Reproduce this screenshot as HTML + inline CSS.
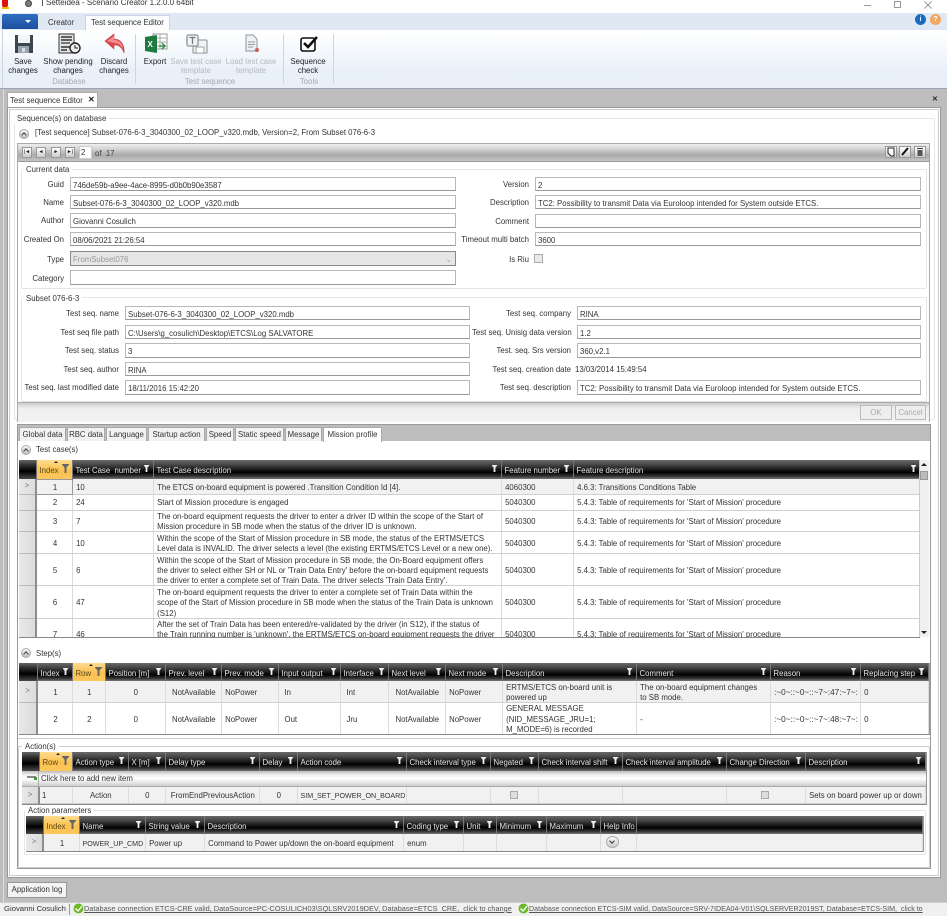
<!DOCTYPE html>
<html><head><meta charset="utf-8"><title>Setteidea - Scenario Creator</title>
<style>
html,body{margin:0;padding:0;background:#bdbdbd}
body{width:947px;height:916px;position:relative;overflow:hidden;font-family:"Liberation Sans",sans-serif;font-size:7.8px;color:#2a2a2a}
#w{position:absolute;left:0;top:0;width:947px;height:916px;overflow:hidden;filter:blur(.35px)}
.a{position:absolute;white-space:nowrap}
.b{position:absolute;box-sizing:border-box}
.t{position:absolute;text-align:center;line-height:9px;white-space:nowrap;color:#222;transform:translateX(-50%)}
.g{color:#b5b9bf}
.gl{position:absolute;text-align:center;color:#a4a9b0;white-space:nowrap;transform:translateX(-50%)}
.fs{position:absolute;box-sizing:border-box;border:1px solid #dfe7ec;border-radius:2px}
.lg{position:absolute;background:#fff;padding:0 3px;white-space:nowrap;line-height:9px;color:#333}
.l{position:absolute;text-align:right;white-space:nowrap;line-height:15px;color:#333}
.i{position:absolute;box-sizing:border-box;background:#fff;border:1px solid #b8b8b8;border-bottom-color:#999;padding-left:2px;white-space:nowrap;overflow:hidden;color:#333;line-height:15px}
.tg{position:absolute;width:10px;height:10px;border-radius:50%;box-sizing:border-box;border:1px solid #aaa;background:linear-gradient(#fafafa,#bbb)}
.tg:after{content:"";position:absolute;left:2px;top:3px;width:3px;height:3px;border-left:1px solid #444;border-top:1px solid #444;transform:rotate(45deg)}
.tb{position:absolute;top:427px;height:14px;box-sizing:border-box;background:#f2f2f2;border:1px solid #aaa;border-bottom:0;text-align:center;line-height:13px;white-space:nowrap;color:#333}
.gw{position:absolute;overflow:hidden;background:#fff}
table{border-collapse:collapse;table-layout:fixed;position:absolute;left:0;top:0}
th{background:linear-gradient(#6a6a6a 0,#464646 25%,#1a1a1a 50%,#000 65%,#333 85%,#777 100%);color:#e4e4e4;font-weight:normal;text-align:left;padding:2px 0 0 3px;border-right:1px solid #777;position:relative;white-space:nowrap;overflow:hidden;box-sizing:border-box}
th.o{background:linear-gradient(#fddc8e,#fbc14f 55%,#fcc75e);color:#5b4a20}
th.o:before{content:"";position:absolute;left:50%;top:1px;border:2px solid transparent;border-top:0;border-bottom:2px solid #222}
th i{position:absolute;right:3px;top:5px;width:6px;height:7px;background:#eee;clip-path:polygon(0 0,100% 0,65% 40%,65% 100%,35% 100%,35% 40%)}
th.o i{right:2px;top:4px;width:8px;height:9px;background:#666;clip-path:polygon(0 0,100% 0,62% 40%,62% 100%,38% 100%,38% 40%)}
td{box-sizing:border-box;border-right:1px solid #dcdcdc;border-bottom:1px solid #d0d0d0;padding:0 2px 0 3.6px;line-height:10.4px;white-space:nowrap;color:#333;background:#fff}
td b{display:block;position:relative;top:1.5px;font-weight:normal}
tr.s td{background:#f1f1f1}
td.n{text-align:center}
td.r{background:linear-gradient(90deg,#e8e8e8,#dcdcdc)!important;border-right:2px solid #8d8d8d;border-bottom:1px solid #bbb;text-align:center;color:#777;padding:0}
th.k{background:linear-gradient(#666,#2a2a2a 30%,#000 60%,#4a4a4a 100%)}
.nv{position:absolute;width:10px;height:11px;top:147px;box-sizing:border-box;border:1px solid #999;background:linear-gradient(#fff,#ccc);font-size:5px;text-align:center;line-height:9px;color:#111}
.nr{position:absolute;width:12px;height:12px;top:146px;box-sizing:border-box;border:1px solid #999;background:linear-gradient(#fff,#ccc)}
.cb{position:absolute;width:8px;height:8px;box-sizing:border-box;border:1px solid #aaa;background:#ddd}
u{text-decoration:underline}
</style></head><body><div id="w">

<!-- title bar -->
<div class="b" style="left:0;top:0;width:947px;height:13px;background:#fff"></div>
<div class="b" style="left:2px;top:0;width:6px;height:8px;background:#d8140c;border-radius:0 0 3px 3px"></div>
<div class="b" style="left:2px;top:7px;width:7px;height:2px;background:#f0c000"></div>
<div class="b" style="left:25px;top:0;width:7px;height:7px;border-radius:50%;background:#7c7c7c;border:1px solid #444"></div>
<div class="a" style="left:46px;top:-2px;line-height:10px;font-size:8px;color:#333">Setteidea - Scenario Creator 1.2.0.0 64bit</div>
<div class="b" style="left:42px;top:0;width:1px;height:6px;background:#555"></div>
<div class="b" style="left:864px;top:5px;width:7px;height:1px;background:#999"></div>
<div class="b" style="left:894px;top:1px;width:7px;height:7px;border:1px solid #999"></div>
<svg class="b" style="left:924px;top:1px" width="8" height="8"><path d="M0.5 0.5L7.5 7.5M7.5 0.5L0.5 7.5" stroke="#999" fill="none"/></svg>

<!-- ribbon tabs -->
<div class="b" style="left:0;top:13px;width:947px;height:17px;background:#dfe8f3"></div>
<div class="b" style="left:2px;top:14px;width:36px;height:15px;background:linear-gradient(#2f6fc4,#1d4f9f);border-radius:2px 2px 0 0"></div>
<div class="b" style="left:25px;top:20px;border:3px solid transparent;border-top:3px solid #fff;border-bottom:0"></div>
<div class="a" style="left:48px;top:18px;line-height:10px;color:#333">Creator</div>
<div class="b" style="left:85px;top:15px;width:85px;height:16px;background:#fbfdfe;border:1px solid #ccd6e2;border-bottom:0"></div>
<div class="a" style="left:91px;top:18px;line-height:10px;color:#333">Test sequence Editor</div>
<div class="b" style="left:915px;top:14px;width:11px;height:11px;border-radius:50%;background:#1a6cc0;color:#fff;text-align:center;line-height:11px;font-weight:bold;font-size:7px">i</div>
<div class="b" style="left:930px;top:14px;width:11px;height:11px;border-radius:50%;background:#f2a860;color:#fff;text-align:center;line-height:11px;font-weight:bold;font-size:7px">?</div>

<!-- ribbon -->
<div class="b" style="left:0;top:30px;width:947px;height:59px;background:linear-gradient(#fff,#fafcfe 20%,#e9f0f9 70%,#e8eff8);border-bottom:1px solid #9aa5b1"></div>
<div class="b" style="left:2px;top:30px;width:1px;height:58px;background:#ccd4de"></div>
<div class="b" style="left:135px;top:34px;width:1px;height:50px;background:#cdd6e0"></div>
<div class="b" style="left:283px;top:34px;width:1px;height:50px;background:#cdd6e0"></div>
<div class="b" style="left:333px;top:34px;width:1px;height:50px;background:#cdd6e0"></div>

<svg class="b" style="left:14px;top:34px" width="20" height="20"><path d="M1 1H19V19H1Z" fill="#3c4650"/><path d="M4 1H16V9H4Z" fill="#f2f4f6"/><path d="M4 12H15V19H4Z" fill="#9aa3ad"/><path d="M8 14H11V18H8Z" fill="#d8dde2"/></svg>
<svg class="b" style="left:58px;top:33px" width="23" height="22"><path d="M1 1H16V20H1Z" fill="#e4e4e4" stroke="#333"/><path d="M3 4H14M3 7H14M3 14H14M3 17H9" stroke="#333" stroke-width="1.6"/><path d="M3 10H12" stroke="#777" stroke-width="2"/><circle cx="17" cy="15" r="5" fill="#eee" stroke="#222" stroke-width="1.4"/><path d="M17 12V15H20" stroke="#222" fill="none"/></svg>
<svg class="b" style="left:104px;top:33px" width="22" height="22"><path d="M1 8L10 1V6C16 6 21 11 20 20C18 14 15 12 10 12V16Z" fill="#e2474b" stroke="#b8484c" stroke-width=".6"/><path d="M3 8L10 3V7C15 7 19 11 19 16C17 12 14 10 10 10" fill="#f38e90"/></svg>
<svg class="b" style="left:144px;top:33px" width="24" height="22"><path d="M9 1H23V16H9Z" fill="#fff" stroke="#999"/><path d="M9 5H23M9 9H23M9 13H23M16 1V16" stroke="#aaa"/><path d="M1 4L13 2V20L1 18Z" fill="#1f7a3e"/><text x="3.5" y="14" font-size="8" font-weight="bold" fill="#fff" font-family="Liberation Sans">X</text><path d="M15 13H21M18 10L21 13L18 16" stroke="#2a8a4a" stroke-width="1.4" fill="none"/></svg>
<svg class="b" style="left:186px;top:34px" width="22" height="20"><rect x="7" y="6" width="14" height="13" rx="1" fill="#f1f3f5" stroke="#9ea3a8" stroke-width="1.3"/><path d="M10 13H18V19H10Z" fill="#fff" stroke="#9ea3a8"/><rect x="1" y="1" width="11" height="11" rx="1.5" fill="#f1f3f5" stroke="#8f9498" stroke-width="1.3"/><path d="M3.5 3.5H9.5M6.5 3.5V10" stroke="#777" stroke-width="1.3"/></svg>
<svg class="b" style="left:244px;top:34px" width="16" height="20"><path d="M2 1H9L13 5V17H2Z" fill="#eef0f2" stroke="#a2a6aa" stroke-width="1.2"/><path d="M4 8H11M4 10.5H11M4 13H9" stroke="#999"/><circle cx="13" cy="16" r="2" fill="#c9605a"/></svg>
<svg class="b" style="left:299px;top:34px" width="20" height="20"><rect x="2" y="4" width="14" height="13" rx="2" fill="#fff" stroke="#111" stroke-width="1.6"/><path d="M5 9L9 13L18 3" stroke="#111" stroke-width="2.6" fill="none"/></svg>

<div class="t" style="left:23px;top:57px">Save<br>changes</div>
<div class="t" style="left:68px;top:57px">Show pending<br>changes</div>
<div class="t" style="left:114px;top:57px">Discard<br>changes</div>
<div class="t" style="left:155px;top:57px">Export</div>
<div class="t g" style="left:196px;top:57px">Save test case<br>template</div>
<div class="t g" style="left:251px;top:57px">Load test case<br>template</div>
<div class="t" style="left:308px;top:57px">Sequence<br>check</div>
<div class="gl" style="left:69px;top:77px">Database</div>
<div class="gl" style="left:210px;top:77px">Test sequence</div>
<div class="gl" style="left:309px;top:77px">Tools</div>

<!-- document -->
<div class="b" style="left:0;top:89px;width:947px;height:813px;background:#bdbdbd"></div>
<div class="b" style="left:3px;top:89px;width:1px;height:813px;background:#ddd"></div>
<div class="b" style="left:7px;top:92px;width:91px;height:17px;background:#fff;border:1px solid #aaa;border-bottom:0"></div>
<div class="a" style="left:10px;top:96px;line-height:10px;color:#333">Test sequence Editor</div>
<div class="a" style="left:88px;top:95px;line-height:10px;font-weight:bold;font-size:8px;color:#222">✕</div>
<div class="a" style="left:932px;top:95px;line-height:10px;font-weight:bold;font-size:7px;color:#222">✕</div>
<div class="b" style="left:7px;top:107px;width:934px;height:771px;background:#fff;border:1px solid #999"></div>
<div class="b" style="left:9px;top:109px;width:930px;height:767px;border:1px solid #ccc"></div>

<!-- Sequences group -->
<div class="fs" style="left:14px;top:118px;width:921px;height:302px"></div>
<div class="lg" style="left:14px;top:114px">Sequence(s) on database</div>
<div class="tg" style="left:19px;top:129px"></div>
<div class="a" style="left:35px;top:128px;line-height:10px;color:#333">[Test sequence] Subset-076-6-3_3040300_02_LOOP_v320.mdb, Version=2, From Subset 076-6-3</div>

<div class="b" style="left:17px;top:143px;width:913px;height:279px;border:1px solid #aaa"></div>
<div class="b" style="left:18px;top:144px;width:911px;height:18px;background:linear-gradient(#eee,#d8d8d8 25%,#aaa 65%,#c4c4c4);border-bottom:1px solid #999"></div>
<div class="nv" style="left:22px">|◄</div><div class="nv" style="left:36px">◄</div><div class="nv" style="left:51px">►</div><div class="nv" style="left:65px">►|</div>
<div class="b" style="left:79px;top:146px;width:13px;height:13px;background:#fff;border:1px solid #ccc;line-height:12px;padding-left:1px;color:#333">2</div>
<div class="a" style="left:95px;top:149px;line-height:10px;color:#444">of&nbsp; 17</div>
<div class="nr" style="left:885px"><svg width="10" height="10" style="display:block"><path d="M2 1H8V9H5L2 6Z" fill="#fff" stroke="#222"/></svg></div>
<div class="nr" style="left:899px"><svg width="10" height="10" style="display:block"><path d="M2 8L8 1" stroke="#111" stroke-width="2"/></svg></div>
<div class="nr" style="left:914px"><svg width="10" height="10" style="display:block"><path d="M2.5 3H7.5V9H2.5Z" fill="#555"/><path d="M2 1.5H8" stroke="#333"/></svg></div>

<!-- Current data -->
<div class="fs" style="left:21px;top:169px;width:906px;height:120px"></div>
<div class="lg" style="left:23px;top:165px">Current data</div>
<div class="l" style="left:10px;width:54px;top:177px">Guid</div><div class="i" style="left:70px;top:177px;width:386px;height:14px">746de59b-a9ee-4ace-8995-d0b0b90e3587</div>
<div class="l" style="left:10px;width:54px;top:195px">Name</div><div class="i" style="left:70px;top:195px;width:386px;height:14px">Subset-076-6-3_3040300_02_LOOP_v320.mdb</div>
<div class="l" style="left:10px;width:54px;top:213px">Author</div><div class="i" style="left:70px;top:213px;width:386px;height:15px">Giovanni Cosulich</div>
<div class="l" style="left:10px;width:54px;top:232px">Created On</div><div class="i" style="left:70px;top:232px;width:386px;height:14px">08/06/2021 21:26:54</div>
<div class="l" style="left:10px;width:54px;top:252px">Type</div><div class="i" style="left:70px;top:251px;width:386px;height:15px;background:#e6e6e6;border-color:#888;color:#999">FromSubset076<span style="position:absolute;right:3px;top:0;color:#aaa">⌄</span></div>
<div class="l" style="left:10px;width:54px;top:271px">Category</div><div class="i" style="left:70px;top:270px;width:386px;height:15px"></div>

<div class="l" style="left:460px;width:69px;top:177px">Version</div><div class="i" style="left:535px;top:177px;width:386px;height:14px">2</div>
<div class="l" style="left:460px;width:69px;top:195px">Description</div><div class="i" style="left:535px;top:195px;width:386px;height:14px">TC2: Possibility to transmit Data via Euroloop intended for System outside ETCS.</div>
<div class="l" style="left:460px;width:69px;top:214px">Comment</div><div class="i" style="left:535px;top:214px;width:386px;height:14px"></div>
<div class="l" style="left:450px;width:79px;top:232px">Timeout multi batch</div><div class="i" style="left:535px;top:232px;width:386px;height:14px">3600</div>
<div class="l" style="left:460px;width:69px;top:252px">Is Riu</div><div class="cb" style="left:534px;top:254px;width:9px;height:9px;background:#e9e9e9"></div>

<!-- Subset -->
<div class="fs" style="left:21px;top:297px;width:906px;height:105px"></div>
<div class="lg" style="left:23px;top:294px">Subset 076-6-3</div>
<div class="l" style="left:20px;width:99px;top:306px">Test seq. name</div><div class="i" style="left:125px;top:306px;width:345px;height:14px">Subset-076-6-3_3040300_02_LOOP_v320.mdb</div>
<div class="l" style="left:20px;width:99px;top:325px">Test seq file path</div><div class="i" style="left:125px;top:325px;width:345px;height:14px">C:\Users\g_cosulich\Desktop\ETCS\Log SALVATORE</div>
<div class="l" style="left:20px;width:99px;top:343px">Test seq. status</div><div class="i" style="left:125px;top:343px;width:345px;height:15px">3</div>
<div class="l" style="left:20px;width:99px;top:362px">Test seq. author</div><div class="i" style="left:125px;top:362px;width:345px;height:14px">RINA</div>
<div class="l" style="left:20px;width:99px;top:380px">Test seq. last modified date</div><div class="i" style="left:125px;top:380px;width:345px;height:15px">18/11/2016 15:42:20</div>

<div class="l" style="left:472px;width:99px;top:306px">Test seq. company</div><div class="i" style="left:577px;top:306px;width:344px;height:14px">RINA</div>
<div class="l" style="left:472px;width:99px;top:325px">Test seq. Unisig data version</div><div class="i" style="left:577px;top:325px;width:344px;height:14px">1.2</div>
<div class="l" style="left:472px;width:99px;top:343px">Test. seq. Srs version</div><div class="i" style="left:577px;top:343px;width:344px;height:15px">360,v2.1</div>
<div class="l" style="left:472px;width:99px;top:362px">Test seq. creation date</div><div class="a" style="left:575px;top:362px;line-height:15px;color:#333">13/03/2014 15:49:54</div>
<div class="l" style="left:472px;width:99px;top:380px">Test seq. description</div><div class="i" style="left:577px;top:380px;width:344px;height:15px">TC2: Possibility to transmit Data via Euroloop intended for System outside ETCS.</div>

<!-- OK / Cancel bar -->
<div class="b" style="left:18px;top:402px;width:911px;height:20px;background:linear-gradient(#ccc,#f0f0f0 30%,#f2f2f2);border-top:1px solid #aaa"></div>
<div class="b" style="left:860px;top:405px;width:32px;height:15px;background:#eee;border:1px solid #bbb;text-align:center;line-height:13px;color:#aaa">OK</div>
<div class="b" style="left:895px;top:405px;width:31px;height:15px;background:#eee;border:1px solid #bbb;text-align:center;line-height:13px;color:#aaa">Cancel</div>

<!-- Tabs -->
<div class="b" style="left:17px;top:424px;width:914px;height:445px;background:#fff;border:1px solid #999"></div>
<div class="b" style="left:18px;top:425px;width:912px;height:16px;background:#bdbdbd"></div>
<div class="tb" style="left:19px;width:47px">Global data</div>
<div class="tb" style="left:67px;width:38px">RBC data</div>
<div class="tb" style="left:106px;width:41px">Language</div>
<div class="tb" style="left:148px;width:57px">Startup action</div>
<div class="tb" style="left:206px;width:28px">Speed</div>
<div class="tb" style="left:235px;width:49px">Static speed</div>
<div class="tb" style="left:285px;width:37px">Message</div>
<div class="tb" style="left:323px;width:59px;height:15px;background:#fff">Mission profile</div>

<div class="tg" style="left:21px;top:445px"></div>
<div class="a" style="left:36px;top:445px;line-height:10px;color:#333">Test case(s)</div>

<!-- Test cases grid -->
<div class="gw" style="left:19px;top:460px;width:901px;height:177px;border-bottom:1px solid #888">
<table style="width:901px"><colgroup><col style="width:17px"><col style="width:36px"><col style="width:81px"><col style="width:348px"><col style="width:72px"><col style="width:347px"></colgroup>
<tr style="height:19px"><th class="k"></th><th class="o">Index<i></i></th><th>Test Case&nbsp; number<i></i></th><th>Test Case description<i></i></th><th>Feature number<i></i></th><th>Feature description<i></i></th></tr>
<tr class="s" style="height:15px"><td class="r">&gt;</td><td class="n" style="border:1px solid #999"><b>1</b></td><td><b>10</b></td><td><b>The ETCS on-board equipment is powered .Transition Condition Id [4].</b></td><td><b>4060300</b></td><td><b>4.6.3: Transitions Conditions Table</b></td></tr>
<tr style="height:16px"><td class="r"></td><td class="n"><b>2</b></td><td><b>24</b></td><td><b>Start of Mission procedure is engaged</b></td><td><b>5040300</b></td><td><b>5.4.3: Table of requirements for 'Start of Mission' procedure</b></td></tr>
<tr style="height:21px"><td class="r"></td><td class="n"><b>3</b></td><td><b>7</b></td><td><b>The on-board equipment requests the driver to enter a driver ID within the scope of the Start of<br>Mission procedure in SB mode when the status of the driver ID is unknown.</b></td><td><b>5040300</b></td><td><b>5.4.3: Table of requirements for 'Start of Mission' procedure</b></td></tr>
<tr style="height:21px"><td class="r"></td><td class="n"><b>4</b></td><td><b>10</b></td><td><b>Within the scope of the Start of Mission procedure in SB mode, the status of the ERTMS/ETCS<br>Level data is INVALID. The driver selects a level (the existing ERTMS/ETCS Level or a new one).</b></td><td><b>5040300</b></td><td><b>5.4.3: Table of requirements for 'Start of Mission' procedure</b></td></tr>
<tr style="height:32px"><td class="r"></td><td class="n"><b>5</b></td><td><b>6</b></td><td><b>Within the scope of the Start of Mission procedure in SB mode, the On-Board equipment offers<br>the driver to select either SH or NL or 'Train Data Entry' before the on-board equipment requests<br>the driver to enter a complete set of Train Data. The driver selects 'Train Data Entry'.</b></td><td><b>5040300</b></td><td><b>5.4.3: Table of requirements for 'Start of Mission' procedure</b></td></tr>
<tr style="height:32px"><td class="r"></td><td class="n"><b>6</b></td><td><b>47</b></td><td><b>The on-board equipment requests the driver to enter a complete set of Train Data within the<br>scope of the Start of Mission procedure in SB mode when the status of the Train Data is unknown<br>(S12)</b></td><td><b>5040300</b></td><td><b>5.4.3: Table of requirements for 'Start of Mission' procedure</b></td></tr>
<tr style="height:32px"><td class="r"></td><td class="n"><b>7</b></td><td><b>46</b></td><td><b>After the set of Train Data has been entered/re-validated by the driver (in S12), if the status of<br>the Train running number is 'unknown', the ERTMS/ETCS on-board equipment requests the driver<br>&nbsp;</b></td><td><b>5040300</b></td><td><b>5.4.3: Table of requirements for 'Start of Mission' procedure</b></td></tr>
</table></div>
<!-- scrollbar -->
<div class="b" style="left:919px;top:460px;width:10px;height:177px;background:#f0f0f0;border-left:1px solid #ccc"></div>
<div class="b" style="left:921px;top:463px;border:3px solid transparent;border-top:0;border-bottom:3px solid #222"></div>
<div class="b" style="left:920px;top:471px;width:8px;height:9px;background:#bbb;border:1px solid #999"></div>
<div class="b" style="left:921px;top:631px;border:3px solid transparent;border-bottom:0;border-top:3px solid #222"></div>

<div class="tg" style="left:21px;top:648px"></div>
<div class="a" style="left:36px;top:649px;line-height:10px;color:#333">Step(s)</div>

<!-- Steps grid -->
<div class="gw" style="left:19px;top:663px;width:910px;height:71px;border-bottom:1px solid #888;border-right:1px solid #999">
<table style="width:909px"><colgroup><col style="width:18px"><col style="width:35px"><col style="width:33px"><col style="width:60px"><col style="width:56px"><col style="width:57px"><col style="width:62px"><col style="width:48px"><col style="width:57px"><col style="width:57px"><col style="width:134px"><col style="width:134px"><col style="width:90px"><col style="width:68px"></colgroup>
<tr style="height:18px"><th class="k"></th><th>Index<i></i></th><th class="o">Row<i></i></th><th>Position [m]<i></i></th><th>Prev. level<i></i></th><th>Prev. mode<i></i></th><th>Input output<i></i></th><th>Interface<i></i></th><th>Next level<i></i></th><th>Next mode<i></i></th><th>Description<i></i></th><th>Comment<i></i></th><th>Reason<i></i></th><th>Replacing step<i></i></th></tr>
<tr class="s" style="height:20px"><td class="r">&gt;</td><td class="n"><b>1</b></td><td class="n"><b>1</b></td><td class="n"><b>0</b></td><td class="n"><b>NotAvailable</b></td><td><b>NoPower</b></td><td style="padding-left:6px"><b>In</b></td><td style="padding-left:6px"><b>Int</b></td><td class="n"><b>NotAvailable</b></td><td><b>NoPower</b></td><td><b>ERTMS/ETCS on-board unit is<br>powered up</b></td><td><b>The on-board equipment changes<br>to SB mode.</b></td><td style="font-size:8.2px"><b>:~0~::~0~::~7~:47:~7~:</b></td><td><b>0</b></td></tr>
<tr style="height:32px"><td class="r"></td><td class="n"><b>2</b></td><td class="n"><b>2</b></td><td class="n"><b>0</b></td><td class="n"><b>NotAvailable</b></td><td><b>NoPower</b></td><td style="padding-left:6px"><b>Out</b></td><td style="padding-left:6px"><b>Jru</b></td><td class="n"><b>NotAvailable</b></td><td><b>NoPower</b></td><td><b>GENERAL MESSAGE<br>(NID_MESSAGE_JRU=1;<br>M_MODE=6) is recorded</b></td><td><b>-</b></td><td style="font-size:8.2px"><b>:~0~::~0~::~7~:48:~7~:</b></td><td><b>0</b></td></tr>
</table></div>

<!-- Actions -->
<div class="b" style="left:18px;top:738px;width:912px;height:1px;background:#ccc"></div>
<div class="fs" style="left:18px;top:746px;width:912px;height:122px;border-color:#ccc"></div>
<div class="lg" style="left:22px;top:742px">Action(s)</div>
<div class="gw" style="left:22px;top:752px;width:904px;height:52px;border-bottom:1px solid #888;border-right:1px solid #999">
<table style="width:903px"><colgroup><col style="width:17px"><col style="width:33px"><col style="width:56px"><col style="width:37px"><col style="width:94px"><col style="width:38px"><col style="width:109px"><col style="width:84px"><col style="width:48px"><col style="width:84px"><col style="width:104px"><col style="width:79px"><col style="width:120px"></colgroup>
<tr style="height:19px"><th class="k"></th><th class="o">Row<i></i></th><th>Action type<i></i></th><th>X [m]<i></i></th><th>Delay type<i></i></th><th>Delay<i></i></th><th>Action code<i></i></th><th>Check interval type<i></i></th><th>Negated<i></i></th><th>Check interval shift<i></i></th><th>Check interval amplitude<i></i></th><th>Change Direction<i></i></th><th>Description<i></i></th></tr>
</table>
<div class="b" style="left:0;top:19px;width:904px;height:16px;background:linear-gradient(#bbb,#eee 25%,#fff 50%,#ddd 85%,#ccc);line-height:15px;padding-left:19px;color:#333;border-bottom:1px solid #aaa">Click here to add new item</div>
<div class="b" style="left:5px;top:24px;width:9px;height:2px;background:#888"></div>
<div class="b" style="left:12px;top:25px;width:3px;height:3px;background:#3a9a3a"></div>
<div class="b" style="left:0;top:19px;width:17px;height:16px;border-right:1px solid #aaa"></div>
<table style="width:903px;top:35px"><colgroup><col style="width:17px"><col style="width:33px"><col style="width:56px"><col style="width:37px"><col style="width:94px"><col style="width:38px"><col style="width:109px"><col style="width:84px"><col style="width:48px"><col style="width:84px"><col style="width:104px"><col style="width:79px"><col style="width:120px"></colgroup>
<tr class="s" style="height:16px"><td class="r">&gt;</td><td style="padding-left:2px"><b>1</b></td><td class="n"><b>Action</b></td><td class="n"><b>0</b></td><td class="n"><b>FromEndPreviousAction</b></td><td class="n"><b>0</b></td><td style="font-size:7.1px;padding-left:3px"><b>SIM_SET_POWER_ON_BOARD</b></td><td></td><td></td><td></td><td></td><td></td><td><b>Sets on board power up or down</b></td></tr>
</table></div>
<div class="cb" style="left:510px;top:791px"></div>
<div class="cb" style="left:761px;top:791px"></div>

<!-- Action parameters -->
<div class="fs" style="left:24px;top:810px;width:902px;height:45px"></div>
<div class="lg" style="left:25px;top:806px">Action parameters</div>
<div class="gw" style="left:26px;top:816px;width:897px;height:35px;border-bottom:1px solid #888;border-right:1px solid #999">
<table style="width:896px"><colgroup><col style="width:17px"><col style="width:36px"><col style="width:66px"><col style="width:59px"><col style="width:199px"><col style="width:60px"><col style="width:33px"><col style="width:50px"><col style="width:54px"><col style="width:36px"><col style="width:286px"></colgroup>
<tr style="height:18px"><th class="k"></th><th class="o">Index<i></i></th><th>Name<i></i></th><th>String value<i></i></th><th>Description<i></i></th><th>Coding type<i></i></th><th>Unit<i></i></th><th>Minimum<i></i></th><th>Maximum<i></i></th><th>Help Info</th><th></th></tr>
<tr class="s" style="height:17px"><td class="r">&gt;</td><td class="n"><b>1</b></td><td style="font-size:7.1px;padding-left:3px"><b>POWER_UP_CMD</b></td><td><b>Power up</b></td><td><b>Command to Power up/down the on-board equipment</b></td><td><b>enum</b></td><td></td><td></td><td></td><td></td><td></td></tr>
</table></div>
<div class="b" style="left:606px;top:836px;width:13px;height:12px;border-radius:50%;border:1px solid #aaa;background:linear-gradient(#fafafa,#ccc)"></div>
<div class="b" style="left:610px;top:839px;width:4px;height:4px;border-right:1px solid #333;border-bottom:1px solid #333;transform:rotate(45deg)"></div>

<!-- Application log -->
<div class="b" style="left:7px;top:882px;width:60px;height:16px;background:#f3f3f3;border:1px solid #999;text-align:center;line-height:14px;color:#333">Application log</div>

<!-- Status bar -->
<div class="b" style="left:0;top:902px;width:947px;height:14px;background:#f0f0f0;border-top:1px solid #ccc"></div>
<div class="a" style="left:4px;top:904px;line-height:10px;font-size:7.7px;color:#333">Giovanni Cosulich</div>
<div class="b" style="left:69px;top:904px;width:1px;height:11px;background:#999"></div>
<svg class="b" style="left:73px;top:903px" width="11" height="11"><circle cx="5.5" cy="5.5" r="5" fill="#6bb82b"/><path d="M2.5 5.5L5 8L9 3" stroke="#fff" stroke-width="1.4" fill="none"/></svg>
<div class="a" style="left:84px;top:904px;line-height:10px;font-size:7.35px;color:#555"><u>Database connection ETCS-CRE valid, DataSource=PC-COSULICH03\SQLSRV2019DEV, Database=ETCS_CRE,&nbsp; click to change</u></div>
<svg class="b" style="left:518px;top:903px" width="11" height="11"><circle cx="5.5" cy="5.5" r="5" fill="#6bb82b"/><path d="M2.5 5.5L5 8L9 3" stroke="#fff" stroke-width="1.4" fill="none"/></svg>
<div class="a" style="left:529px;top:904px;line-height:10px;font-size:7.1px;color:#555"><u>Database connection ETCS-SIM valid, DataSource=SRV-7IDEA04-V01\SQLSERVER2019ST, Database=ETCS-SIM,&nbsp; click to</u></div>

</div></body></html>
